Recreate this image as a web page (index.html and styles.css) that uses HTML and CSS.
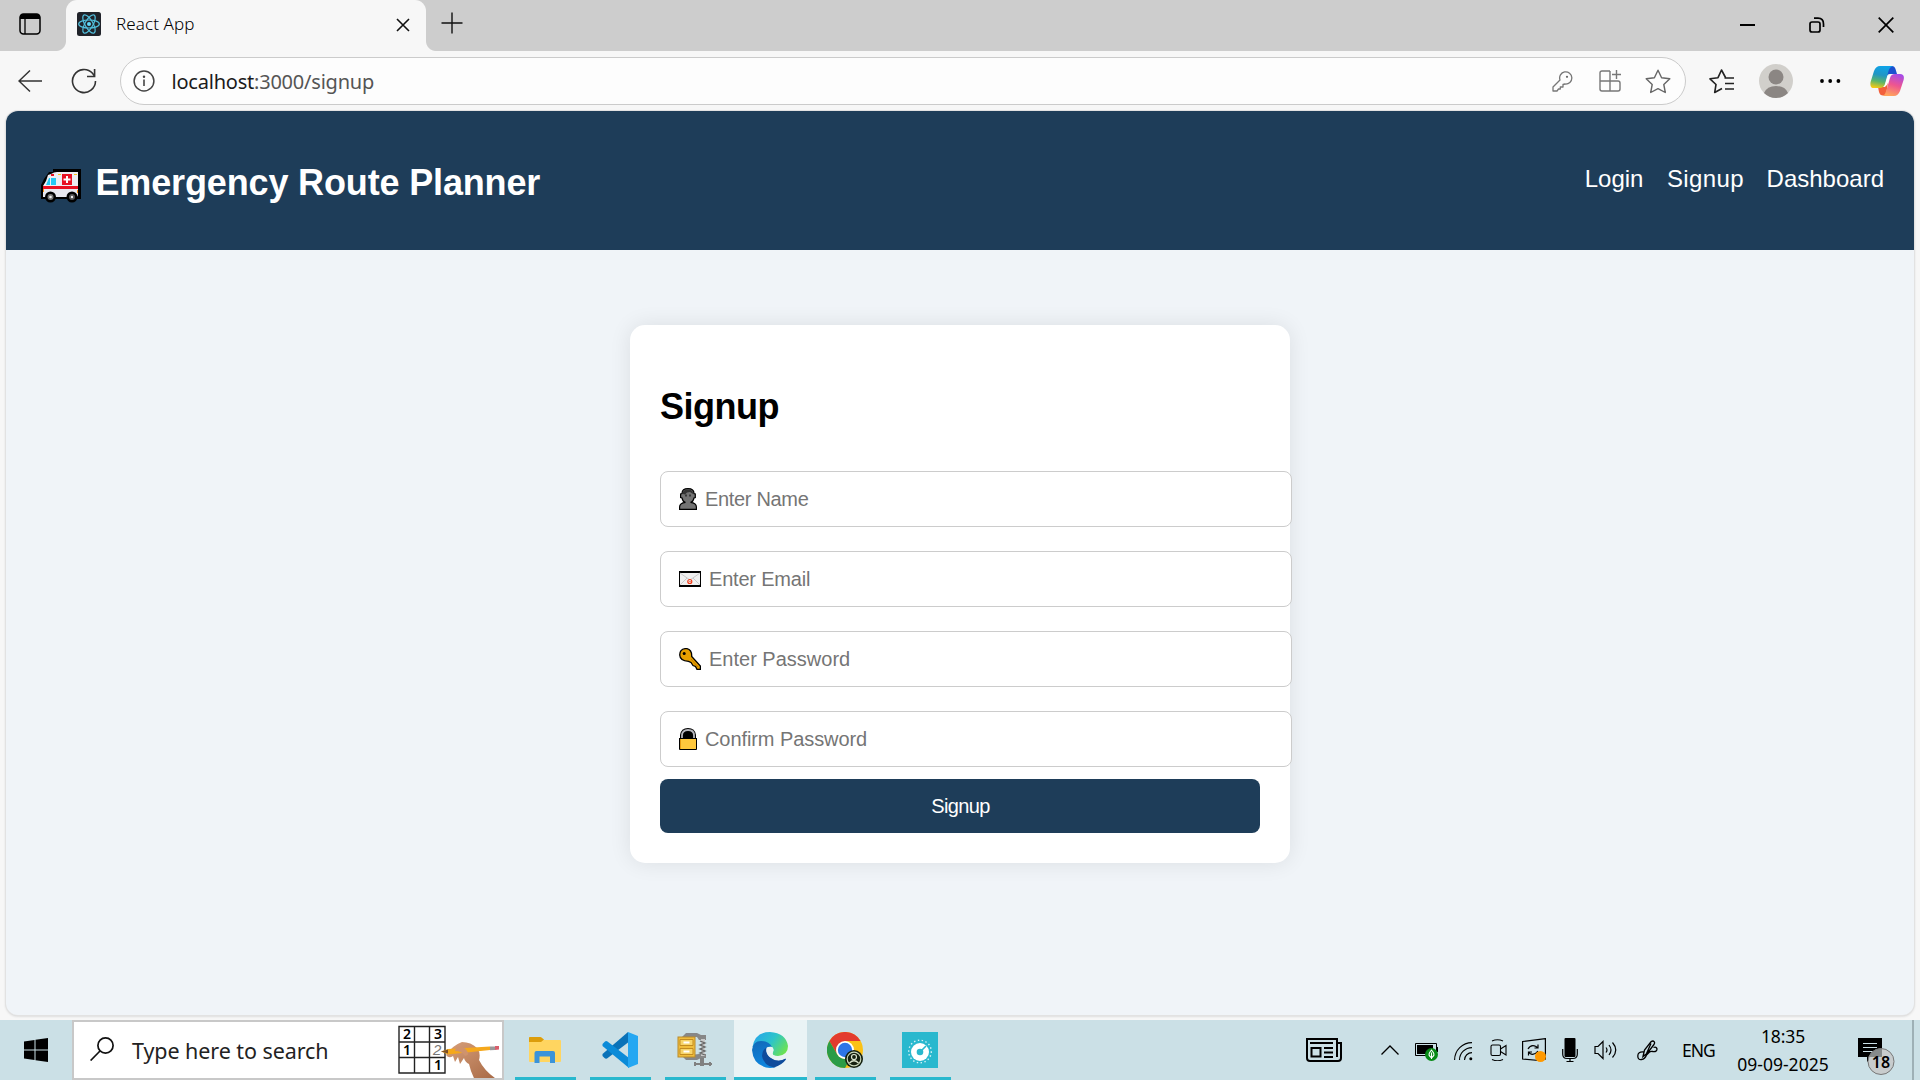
FILE: index.html
```html
<!DOCTYPE html>
<html lang="en">
<head>
<meta charset="utf-8">
<title>React App</title>
<link rel="stylesheet" href="styles.css">
</head>
<body>
<div class="screen">
  <div class="tabbar">
    <svg class="tab-actions" width="22" height="22" viewBox="0 0 22 22"><rect x="1" y="1" width="20" height="20" rx="3.5" fill="none" stroke="#000" stroke-width="1.5"/><path d="M1 6V4Q1 1 4 1H18Q21 1 21 4V6Z"/><path d="M6 6V21" stroke="#000" stroke-width="1.3"/></svg>
    <div class="tab">
      <svg class="react" width="24" height="24" viewBox="0 0 24 24"><rect width="24" height="24" rx="2.5" fill="#20232a"/><g fill="none" stroke="#52c1de" stroke-width="1.2"><ellipse cx="12" cy="12" rx="10.3" ry="4"/><ellipse cx="12" cy="12" rx="10.3" ry="4" transform="rotate(60 12 12)"/><ellipse cx="12" cy="12" rx="10.3" ry="4" transform="rotate(120 12 12)"/></g><circle cx="12" cy="12" r="2" fill="#61dafb"/></svg>
      <span class="tab-title">React App</span>
      <svg class="tab-close" width="14" height="14" viewBox="0 0 14 14"><path d="M1 1L13 13M13 1L1 13" stroke="#111" stroke-width="1.6"/></svg>
    </div>
    <svg class="plus" width="22" height="22" viewBox="0 0 22 22"><path d="M.5 11H21.5M11 .5V21.5" stroke="#111" stroke-width="1.4"/></svg>
    <div class="win-buttons">
      <svg width="16" height="16" viewBox="0 0 16 16"><path d="M0 8H15" stroke="#000" stroke-width="2"/></svg>
      <svg width="16" height="16" viewBox="0 0 16 16" fill="none" stroke="#000" stroke-width="1.7"><rect x="1" y="5" width="10" height="10" rx="2"/><path d="M5 1.2H9Q14.5 1.2 14.5 7V10"/></svg>
      <svg width="16" height="16" viewBox="0 0 16 16"><path d="M.7.7L15.3 15.3M15.3.7L.7 15.3" stroke="#000" stroke-width="1.7"/></svg>
    </div>
  </div>

  <div class="toolbar">
    <svg class="back" width="25" height="24" viewBox="0 0 25 24" fill="none" stroke="#333" stroke-width="1.5"><path d="M24 12H1M12 1.5L1 12L12 22.5"/></svg>
    <svg class="reload" width="26" height="26" viewBox="0 0 26 26" fill="none" stroke="#333" stroke-width="1.6"><path d="M24.5 13A11.5 11.5 0 1 1 21.5 5.3L23.5 8"/><path d="M23.6 1V8.5H16"/></svg>
    <div class="address">
      <svg width="22" height="22" viewBox="0 0 22 22"><circle cx="11" cy="11" r="9.9" fill="none" stroke="#444" stroke-width="1.5"/><circle cx="11" cy="6.7" r="1.2" fill="#444"/><path d="M11 9.5V16" stroke="#444" stroke-width="1.6"/></svg>
      <span class="url"><span class="host">localhost</span>:3000/signup</span>
      <svg class="key" width="21" height="21" viewBox="0 0 21 21" fill="none" stroke="#777" stroke-width="1.3" stroke-linejoin="round"><path d="M8 9A6.1 6.1 0 1 1 13 13L11 13.5V16H8.3V18H6.5L5 20H1V16Z"/><circle cx="15" cy="5.8" r="1.1" fill="#666" stroke="none"/></svg>
      <svg class="apps" width="22" height="22" viewBox="0 0 22 22" fill="none" stroke="#777" stroke-width="1.4"><path d="M11 1H3Q1 1 1 3V19Q1 21 3 21H19Q21 21 21 19V13Q21 11 19 11H1M11 1V21M17.5 0V9M13 4.5H22"/></svg>
      <svg class="star" width="26" height="25" viewBox="0 0 26 25" fill="none" stroke="#666" stroke-width="1.4" stroke-linejoin="round"><path d="M13 1.2L16.6 8.7L24.8 9.8L18.8 15.5L20.3 23.5L13 19.7L5.7 23.5L7.2 15.5L1.2 9.8L9.4 8.7Z"/></svg>
    </div>
    <svg class="favs" width="26" height="25" viewBox="0 0 26 25" fill="none" stroke="#222" stroke-width="1.6" stroke-linejoin="round"><path d="M16.5 8.5L12.5 1L9 8.7L1 9.8L7 15.5L5.7 23.5L13 19.5M15.5 9H25M16 14.5H25M16 20H25"/></svg>
    <svg class="avatar" width="34" height="34" viewBox="0 0 34 34"><circle cx="17" cy="17" r="17" fill="#d1cfcb"/><circle cx="17" cy="13" r="7.5" fill="#8b8683"/><path d="M5 29Q8 22 17 22Q26 22 29 29A17 17 0 0 1 5 29Z" fill="#8b8683"/></svg>
    <svg class="dots" width="22" height="6" viewBox="0 0 22 6"><circle cx="3" cy="3" r="1.9"/><circle cx="11.2" cy="3" r="1.9"/><circle cx="19.4" cy="3" r="1.9"/></svg>
    <svg class="copilot" width="34" height="32" viewBox="0 0 34 32">
      <defs><linearGradient id="cpa" x1=".5" y1="0" x2=".3" y2="1"><stop offset="0" stop-color="#0ea3e8"/><stop offset=".4" stop-color="#2196c4"/><stop offset=".7" stop-color="#5bb56a"/><stop offset="1" stop-color="#f5c913"/></linearGradient><linearGradient id="cpb" x1=".7" y1="0" x2=".4" y2="1"><stop offset="0" stop-color="#a64be8"/><stop offset=".5" stop-color="#ee5590"/><stop offset="1" stop-color="#ffa35c"/></linearGradient></defs>
      <path d="M17 1H22Q24.500 1 25.500 4L27 9H20Q17 9 16 13Z" fill="#1b50cf"/>
      <path d="M8 22H15L18 17L16 30.500H13Q10 30.500 9 27Z" fill="#f2603c"/>
      <path d="M10 1H23Q19.500 2 18.500 6L15 19Q13.500 23 10 23H4Q-.5 23 .6 17L4 6Q6 1 10 1Z" fill="url(#cpa)"/>
      <path d="M24 31H13Q15.500 29 16.500 25L20 13Q21 9 25 9H30Q35 9 33.600 15L30 26Q28 31 24 31Z" fill="url(#cpb)"/>
      <path d="M20 10.500Q17.500 11 16.500 15L14.500 21.500Q17 21 18 17.500Z" fill="#fff"/>
    </svg>
  </div>

  <div class="page-wrap">
    <div class="page">
      <header class="site-header">
        <div class="brand">
          <svg class="ambulance" width="41" height="34" viewBox="0 0 41 34"><path d="M12 0H40V30H0V16L3 10L8 3H12Z" fill="#000"/><path d="M10 5Q13 3 16 3H37V17H2L5 12L7 6Z" fill="#ededf3"/><path d="M2 20H37V25Q37 28 35 28H2Z" fill="#e9e9f0"/><path d="M2 17H37V20H2Z" fill="#e81123"/><path d="M5 16L8 9H9V16ZM10 9H15V16H10Z" fill="#24c8f4"/><path d="M10 5H13V7H10Z" fill="#e81123"/><path d="M17 5H20V6H17ZM33 5H36V6H33Z" fill="#fbc21b"/><path d="M2 20H3V23H2ZM36 21H37V24H36Z" fill="#f4900c"/><rect x="21" y="5" width="10" height="11" fill="#e81123"/><path d="M26 7V14M22.500 10.500H29.500" stroke="#fff" stroke-width="2"/><circle cx="9.500" cy="28" r="5.500"/><circle cx="31" cy="28" r="5.500"/><circle cx="9.500" cy="28" r="3" fill="#777"/><circle cx="31" cy="28" r="3" fill="#555"/><circle cx="9.500" cy="28" r="1.300" fill="#eee"/><circle cx="31" cy="28" r="1.200" fill="#eee"/></svg>
          <h1>Emergency Route Planner</h1>
        </div>
        <nav><a class="login">Login</a><a class="signup">Signup</a><a>Dashboard</a></nav>
      </header>
      <main>
        <form class="card">
          <h2>Signup</h2>
          <div class="field name">
            <svg width="18" height="22" viewBox="0 0 18 22"><path d="M9 .6Q15 .6 15 5.500L16.300 6V9.500L15 10Q14 14 11.500 14.300Q17.400 15 17.400 19V21.400H.6V19Q.6 15 6.500 14.300Q4 14 3 10L1.600 9.500V6L3 5.500Q3 .6 9 .6Z" fill="#737373" stroke="#000" stroke-width="1.200"/><path d="M4 6Q3 1.500 9 1.500Q14.500 1.500 14 6L11 4L8 4.500L6 6.500Z" fill="#333"/><path d="M7 6.500V8.500M11 6.500V8.500" stroke="#000"/></svg>
            <span class="ph">Enter Name</span>
          </div>
          <div class="field email">
            <svg width="22" height="16" viewBox="0 0 22 16"><rect width="22" height="16"/><rect x="1" y="2" width="20" height="12" fill="#f0f0f0"/><path d="M1 2L11 9L21 2M1 14L8 7M21 14L14 7" fill="none" stroke="#c8c8c8"/><circle cx="10.800" cy="10.500" r="2" fill="none" stroke="#f03a17" stroke-width="1.200"/><circle cx="11" cy="10.500" r=".7" fill="#f03a17"/></svg>
            <span class="ph">Enter Email</span>
          </div>
          <div class="field password">
            <svg width="22" height="22" viewBox="0 0 22 22"><path d="M6 .7H8Q13 2 12.700 8.500L21.400 18V21.400H18L16.500 18.500L14 17.500L12 14.500L9.500 13.300Q1 13 .7 7Q.7 1.500 6 .7Z" fill="#e8a000" stroke="#000" stroke-width="1.300"/><circle cx="5.200" cy="5.400" r="1.500"/><path d="M12 11L19 19" stroke="#c27c00"/></svg>
            <span class="ph">Enter Password</span>
          </div>
          <div class="field confirm">
            <svg width="18" height="22" viewBox="0 0 18 22"><path d="M1 11V7Q2 0 9 0Q16 0 17 7V11Z"/><path d="M3 11V7.500Q3 2 9 2Q15 2 15 7.500V11" fill="none" stroke="#b7b7bd" stroke-width="1.800"/><path d="M0 10H18V21Q18 22 17 22H1Q0 22 0 21Z"/><rect x="1" y="11" width="16" height="10" fill="#ffc83d"/><path d="M1.500 11V21" stroke="#e59b12"/></svg>
            <span class="ph">Confirm Password</span>
          </div>
          <button type="button">Signup</button>
        </form>
      </main>
    </div>
  </div>

  <div class="taskbar">
    <svg class="start" width="24" height="24" viewBox="0 0 24 24"><path d="M0 3.400L10.500 2V11.500H0ZM11.500 1.800L24 0V11.500H11.500ZM0 12.500H10.500V22L0 20.600ZM11.500 12.500H24V24L11.500 22.200Z"/></svg>
    <div class="search">
      <svg width="24" height="24" viewBox="0 0 24 24" fill="none" stroke="#111" stroke-width="1.700"><circle cx="15.500" cy="8.500" r="7.600"/><path d="M10 14L.6 23.500"/></svg>
      <span class="search-text">Type here to search</span>
      <svg class="doodle" width="103" height="56" viewBox="0 0 103 56">
        <defs><linearGradient id="skin" x1="0" y1="0" x2="1" y2="1"><stop offset="0" stop-color="#d8a07b"/><stop offset="1" stop-color="#a66743"/></linearGradient></defs>
        <path d="M1 4.500H47V51H1ZM1 20H47M1 35.500H47M16.500 4.500V51M31.500 4.500V51" fill="#fff" stroke="#222" stroke-width="1.400"/>
        <g class="digits"><text x="5" y="17">2</text><text x="36" y="17">3</text><text x="5" y="33">1</text><text x="36" y="48">1</text><text class="light" x="35" y="33">2</text></g>
        <path d="M48 33Q55 23 64 20Q73 20 79 26Q83 31 81 38Q87 50 100 58H77Q73 51 71 42Q67 40 66 36L62 42L60 35L57 40L55 34Q51 37 48 33Z" fill="url(#skin)"/>
        <path d="M43 29.500L50 27L92 24.500V28L50 32.500Z" fill="#f5a81c"/><path d="M43 29.500L50 27.500V31.500Z" fill="#7b5029"/><path d="M92 24.500H97V28L92 28.300Z" fill="#999"/><path d="M97 24H101V27.500L97 28Z" fill="#d85f6c"/>
        <path d="M58 25Q66 24 69 29Q72 33 67 34Q64 29 57 29Z" fill="#cf936d"/>
      </svg>
    </div>
    <div class="apps-row">
      <div class="app"><svg width="36" height="36" viewBox="0 0 36 36"><path d="M2 6Q2 5 3 5H14L17 8H33Q34 8 34 9V29Q34 30 33 30H3Q2 30 2 29Z" fill="#ffd560"/><path d="M2 6Q2 5 3 5H13Q14 5 15 6L17 7.500L14 10H2Z" fill="#dc9d0b"/><path d="M7.500 31V21Q7.500 19 9.500 19H26Q28 19 28 21V31H23V24.500H12.500V31Z" fill="#3b93d9"/></svg></div>
      <div class="app"><svg width="36" height="36" viewBox="0 0 36 36"><path d="M.5 22L26 0V10.500L5 26.500Q3.500 27 2.500 26L.5 24Z" fill="#0a72b8"/><path d="M.5 12L3 9.500Q4 8.500 5.500 9.500L27 26V36L.5 14Z" fill="#0b8bd8"/><path d="M26 0L36 4V32L26 36Z" fill="#25a7f2"/></svg></div>
      <div class="app"><svg width="36" height="36" viewBox="0 0 36 36"><path d="M5 5L9 1H20L24 3H29V8H22L20 5ZM5 24L9 28H20L24 26H29V22H22Z" fill="#878787"/><path d="M24 7H28V24H24Z" fill="#c9c9c9"/><path d="M23 9L28 11L23 13L28 15L23 17L28 19L23 21L28 23" fill="none" stroke="#666" stroke-width="1.300"/><rect x="1" y="5" width="17" height="20" fill="#f0bd3c" stroke="#b98a2b"/><path d="M3 7.500H16V13.500H3ZM3 16.500H16V22.500H3Z" fill="#f7d469" stroke="#c38c20"/><path d="M6.500 10.500H12.500M6.500 19.500H12.500" stroke="#fff" stroke-width="2"/><path d="M23 26H27V34H23ZM17 31H35V33H17ZM17 30H19V34H17ZM32 30H34V34H32Z" fill="#808080"/></svg></div>
      <div class="app active"><svg width="36" height="36" viewBox="0 0 36 36">
        <defs><linearGradient id="ea" x1="0" y1=".2" x2="1" y2=".7"><stop offset="0" stop-color="#26a5ea"/><stop offset=".5" stop-color="#2cc4cb"/><stop offset="1" stop-color="#6ee34f"/></linearGradient><linearGradient id="eb" x1="0" y1="0" x2=".3" y2="1"><stop offset="0" stop-color="#1168b8"/><stop offset="1" stop-color="#0f86de"/></linearGradient></defs>
        <path d="M.5 15Q3 0 18 0Q34 1 36 14Q36 23 26 24Q19 24 21 20Q22 17 20 15Z" fill="url(#ea)"/>
        <path d="M0 18Q1 9 9 9Q17 9 20 15Q14 13 12 21Q11 33 24 35Q19 36.500 14 35.500Q1 32 0 18Z" fill="url(#eb)"/>
        <path d="M14.500 15.500Q10 18 10 24Q12 34 22 35.500Q30 33 34 27.500Q34 26 32 27Q25 30 18 25Q13 20 14.500 15.500Z" fill="#0f4c9c"/>
        <path d="M14.500 19Q16 14 20 15Q22.500 17 21 20Q19 24 26 24.500Q30 24.500 33.500 22L34 26Q26 31 19 26Q14.500 23 14.500 19Z" fill="#eaf3f5"/></svg></div>
      <div class="app"><svg width="36" height="36" viewBox="0 0 36 36"><circle cx="18" cy="18" r="18" fill="#fbc116"/><path d="M2.400 9A18 18 0 0 1 33.600 9H18L10 22Z" fill="#e33b2e"/><path d="M2.400 9A18 18 0 0 0 18 36L26 22L18 27Q12 26 10 22Z" fill="#2b9c47"/><circle cx="18" cy="18" r="9" fill="#fff"/><circle cx="18" cy="18" r="7.200" fill="#2d75e8"/><circle cx="27" cy="27" r="9" fill="#15200f"/><circle cx="27" cy="27" r="6.800" fill="none" stroke="#c9d6b9" stroke-width="1.200"/><circle cx="27" cy="25" r="2.500" fill="none" stroke="#dce5cf" stroke-width="1.200"/><path d="M22.500 31Q27 26.500 31.500 31" fill="none" stroke="#dce5cf" stroke-width="1.300"/></svg></div>
      <div class="app"><svg width="36" height="36" viewBox="0 0 36 36"><rect width="36" height="36" fill="#29b8ce"/><circle cx="18" cy="19.500" r="11.300" fill="none" stroke="#d9f2f6" stroke-width="1.400" stroke-dasharray="1.400 2.500"/><circle cx="18" cy="20" r="9" fill="#fff"/><circle cx="18" cy="20" r="3.300" fill="#29b8ce"/><path d="M19 19L24 14" stroke="#29b8ce" stroke-width="1.600"/></svg></div>
    </div>
    <div class="tray">
      <svg class="news" width="36" height="24" viewBox="0 0 36 24" fill="none" stroke="#000" stroke-width="2"><path d="M31 5H35V20Q35 23 32 23H4Q1 23 1 20V1H31V19"/><path d="M4 5H27M18 10H27M18 14.500H27M18 19H27" stroke-width="1.800"/><rect x="5.500" y="10" width="9" height="8.500"/></svg>
      <svg class="chev" width="18" height="10" viewBox="0 0 18 10" fill="none" stroke="#000" stroke-width="1.300"><path d="M.5 9.500L9 1L17.500 9.500"/></svg>
      <svg class="battery" width="23" height="20" viewBox="0 0 23 20"><path d="M.5 2.500H21.500V14.500H.5Z" fill="none" stroke="#000"/><path d="M2 4H18V13H2ZM21.500 6H23V11H21.500Z"/><circle cx="16.500" cy="13.500" r="6.500" fill="#078b16"/><path d="M16.500 9Q20 13 18.500 15L16.500 17L14.500 15Q13 13 16.500 9ZM16.500 11.500V18" fill="none" stroke="#fff" stroke-width="1.100"/></svg>
      <svg class="wifi" width="19" height="19" viewBox="0 0 19 19" fill="none" stroke="#000" stroke-width="1.100"><path d="M.6 18A17.500 17.500 0 0 1 18 .6M5.500 18A12.500 12.500 0 0 1 18 5.600M10.500 18A7.500 7.500 0 0 1 18 10.600"/><circle cx="16.800" cy="16.800" r="1.500" fill="#000" stroke="none"/></svg>
      <svg class="meet" width="17" height="22" viewBox="0 0 17 22" fill="none" stroke="#000" stroke-width="1.100"><rect x="1" y="6" width="9.500" height="10.500" rx="1.500"/><path d="M10.500 10L16 6.500V16L10.500 12.500M2 2Q7.500-.5 13 2M2 20.500Q7.500 23 13 20.500"/></svg>
      <svg class="update" width="24" height="24" viewBox="0 0 24 24" fill="none" stroke="#000" stroke-width="1.200"><path d="M.6 3.500L23.400.6V21L17 22.500L.6 21Z"/><path d="M6 11Q9 6 14 8.500L16 10M16 6.500V10H12.500M16 13Q12 18 8 15.500L6.500 14M6.500 17.500V14H10"/><circle cx="18.500" cy="18.500" r="5.500" fill="#ff9900" stroke="none"/></svg>
      <svg class="mic" width="16" height="24" viewBox="0 0 16 24"><rect x="2.500" width="11" height="19" rx="1"/><path d="M.7 11V16Q.7 20.500 5 20.500H11Q15.300 20.500 15.300 16V11M8 20.500V23.500M4.500 23.500H11.500" fill="none" stroke="#000" stroke-width="1.200"/></svg>
      <svg class="sound" width="23" height="20" viewBox="0 0 23 20" fill="none" stroke="#000" stroke-width="1.200"><path d="M1 6.500H4L9 1.500V18.500L4 13.500H1ZM12 7.500Q14 10 12 12.500M15 5Q19 10 15 15M18.500 2.500Q25 10 18.500 17.500"/></svg>
      <svg class="pen" width="21" height="21" viewBox="0 0 21 21" fill="none" stroke="#000" stroke-width="1.300"><path d="M6 16.500L7.500 10L14 1.800Q16 .2 17.300 1.800Q18 3 17 4.500L10.500 13ZM9.500 13.500L14 3.500M6.500 12Q.8 11.500.8 16Q.8 20 4.500 19.500Q8 19 9.500 15L12.500 12Q14 11 16 11.500Q20 12 20 9Q19.500 6.500 16.500 7.500"/></svg>
      <span class="lang">ENG</span>
      <div class="clock"><span class="time">18:35</span><span class="date">09-09-2025</span></div>
      <svg class="notif" width="38" height="38" viewBox="0 0 38 38"><path d="M0 0H24V19H14L9 24V19H0Z"/><path d="M5 5.500H19M5 9.500H19M5 13.500H15" stroke="#cbe0e6" stroke-width="1.200"/><circle cx="23" cy="23.500" r="13" fill="#c8cccd"/><path d="M24 10.550A13 13 0 0 0 10.800 19H14L24 19Z" fill="#858a8b"/><circle cx="23" cy="23.500" r="13" fill="none" stroke="#777"/><text class="badge" x="23" y="29.500">18</text></svg>
      <div class="desktop-edge"></div>
    </div>
  </div>
</div>
</body>
</html>
```

FILE: styles.css
```css
* { box-sizing: border-box; }
body { margin: 0; background: #f7f7f7; font-family: "Noto Sans", "Open Sans", sans-serif; color: #000; }
svg { display: block; flex: none; }
.screen { width: 1920px; height: 1080px; overflow: hidden; display: flex; flex-direction: column; }

/* Browser tab strip */
.tabbar { height: 51px; background: #cdcdcd; display: flex; align-items: flex-start; flex: none; }
.tab-actions { margin: 13px 25px 0 19px; }
.tab { position: relative; width: 360px; height: 51px; background: #f7f7f7; border-radius: 11px 11px 0 0; display: flex; padding: 0 16px 0 11px; }
.tab::before, .tab::after { content: ""; position: absolute; bottom: 0; width: 10px; height: 10px; }
.tab::before { left: -10px; background: radial-gradient(circle at 0 0, #cdcdcd 9.5px, #f7f7f7 10.5px); }
.tab::after { right: -10px; background: radial-gradient(circle at 100% 0, #cdcdcd 9.5px, #f7f7f7 10.5px); }
.react { margin-top: 12px; }
.tab-title { margin: 12px auto 0 15px; font-size: 17px; line-height: 24px; font-weight: 300; letter-spacing: 0.1px; }
.tab-close { margin-top: 18px; }
.plus { margin: 12px 0 0 15px; }
.win-buttons { display: flex; gap: 53px; margin: 17px 26.5px 0 auto; }

/* Browser toolbar */
.toolbar { height: 60px; display: flex; align-items: center; flex: none; background: #f7f7f7; padding-right: 16px; }
.back { margin: 0 0 1px 18px; }
.reload { margin-left: 28px; }
.address { width: 1566px; height: 48px; margin-left: 23px; border: 1px solid #cbcbcb; border-radius: 24px; background: #fdfdfd; display: flex; align-items: center; padding: 0 14px 0 12px; }
.url { margin: 1px auto 0 16.5px; font-size: 20px; line-height: 28px; letter-spacing: -0.22px; color: #555; }
.host { color: #1b1b1b; }
.apps { margin-left: 26px; }
.star { margin-left: 24px; }
.favs { margin-left: 23px; }
.avatar { margin-left: 24px; }
.dots { margin-left: 26px; }
.copilot { margin-left: auto; }

/* Page */
.page-wrap { height: 909px; padding: 0 6px 5px; flex: none; }
.page { height: 904px; border-radius: 12px; overflow: hidden; background: #f0f4f8; box-shadow: 0 0 0 1px #e2e2e2, 0 1px 3px rgba(0,0,0,.2); font-family: "Liberation Sans", Arial, sans-serif; }
.site-header { height: 139px; background: #1e3d59; color: #fff; display: flex; justify-content: space-between; align-items: center; padding: 0 30px 0 35px; }
.brand { display: flex; align-items: center; gap: 13.5px; padding-top: 3px; }
.ambulance { margin-top: 8px; }
h1 { margin: 0; font-size: 36px; line-height: 41px; letter-spacing: -0.15px; }
nav { display: flex; gap: 22.5px; font-size: 24px; line-height: 28px; padding-bottom: 4px; }
nav .login { margin-right: 1px; }
nav .signup { letter-spacing: 0.4px; }
main { display: flex; justify-content: center; padding-top: 75px; }
.card { width: 660px; height: 538px; padding: 60px 30px 30px; border-radius: 15px; background: #fff; box-shadow: 0 0 22px rgba(0,0,0,.09); }
h2 { margin: 0 0 45px; height: 41px; font-size: 36px; line-height: 44px; letter-spacing: -0.5px; }
.field { width: 632px; height: 56px; margin-bottom: 24px; border: 1px solid #ccc; border-radius: 8px; background: #fff; display: flex; align-items: center; gap: 8px; padding: 0 18px; }
.ph { font-size: 20px; line-height: 24px; color: #757575; }
.name .ph { letter-spacing: -0.32px; }
.email .ph { letter-spacing: -0.2px; }
.password .ph { letter-spacing: 0; }
.confirm .ph { letter-spacing: -0.08px; }
button { display: block; width: 600px; height: 54px; margin-top: -12px; padding: 0 0 0 1px; border: 0; border-radius: 8px; background: #1e3d59; color: #fff; font: 20px "Liberation Sans", Arial, sans-serif; letter-spacing: -0.65px; }

/* Taskbar */
.taskbar { height: 60px; background: #cbe0e6; display: flex; align-items: stretch; flex: none; }
.start { margin: 18px 24px 0; }
.search { width: 432px; border: 2px solid #c8c8c8; background: #fff; display: flex; align-items: center; padding-left: 16px; flex: none; }
.search > svg:first-child { margin-bottom: 3px; }
.search-text { margin: 2px 0 0 18px; font-size: 21.5px; line-height: 30px; letter-spacing: -0.07px; color: #222; white-space: nowrap; }
.doodle { margin: 0 1px 0 auto; }
.digits { font: 600 14px "Noto Sans", sans-serif; }
.digits .light { font: italic 15px "Liberation Sans", Arial, sans-serif; fill: #777; }
.apps-row { display: flex; margin-left: 5px; gap: 2px; }
.app { width: 73px; display: flex; justify-content: center; padding: 12px 2px 0 0; background: linear-gradient(#29b8ce, #29b8ce) center bottom / 61px 3px no-repeat; }
.app.active { background: linear-gradient(#29b8ce, #29b8ce) center bottom / 73px 3px no-repeat, #eaf3f5; }
.tray { margin-left: auto; display: flex; align-items: center; }
.chev { margin-left: 39px; }
.battery { margin: 2px 0 0 16px; }
.wifi { margin: 2px 0 0 16px; }
.meet { margin-left: 17px; }
.update { margin-left: 15px; }
.mic { margin-left: 16px; }
.sound { margin-left: 16px; }
.pen { margin-left: 20px; }
.lang { margin-left: 24px; font-size: 17.5px; line-height: 24px; letter-spacing: -1px; width: 34px; }
.clock { margin-left: 15px; width: 104px; display: flex; flex-direction: column; align-items: center; font-size: 17.5px; line-height: 28px; letter-spacing: 0; padding-bottom: 1px; }
.time { letter-spacing: -0.1px; }
.notif { margin: 14px 0 0 23px; }
.badge { font: 600 16px "Noto Sans", sans-serif; text-anchor: middle; }
.desktop-edge { align-self: stretch; margin-left: 16px; width: 8px; border-left: 2px solid #9eb0b6; }
```
